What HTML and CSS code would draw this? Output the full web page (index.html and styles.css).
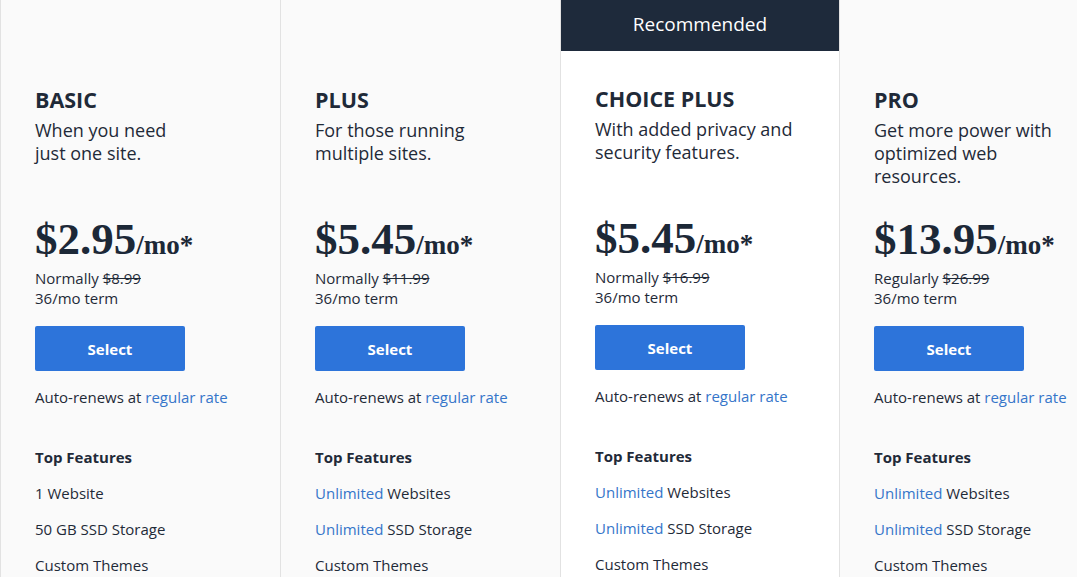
FILE: index.html
```html
<!DOCTYPE html>
<html lang="en">
<head>
  <meta charset="UTF-8">
  <title>Hosting Plans</title>
  <link rel="stylesheet" href="styles.css">
</head>
<body>
  <div class="plans">
    <div class="plan">
      <div class="plan-badge"></div>
      <div class="plan-body">
        <h3 class="plan-name">BASIC</h3>
        <p class="plan-desc">When you need<br>just one site.</p>
        <div class="plan-price">$2.95<span class="per">/mo*</span></div>
        <p class="plan-note">Normally <s>$8.99</s><br>36/mo term</p>
        <button class="select-btn">Select</button>
        <p class="renews">Auto-renews at <a href="#">regular rate</a></p>
        <h4 class="features-title">Top Features</h4>
        <ul class="features">
          <li>1 Website</li>
          <li>50 GB SSD Storage</li>
          <li>Custom Themes</li>
        </ul>
      </div>
    </div>

    <div class="plan">
      <div class="plan-badge"></div>
      <div class="plan-body">
        <h3 class="plan-name">PLUS</h3>
        <p class="plan-desc">For those running<br>multiple sites.</p>
        <div class="plan-price">$5.45<span class="per">/mo*</span></div>
        <p class="plan-note">Normally <s>$11.99</s><br>36/mo term</p>
        <button class="select-btn">Select</button>
        <p class="renews">Auto-renews at <a href="#">regular rate</a></p>
        <h4 class="features-title">Top Features</h4>
        <ul class="features">
          <li><span class="hl">Unlimited</span> Websites</li>
          <li><span class="hl">Unlimited</span> SSD Storage</li>
          <li>Custom Themes</li>
        </ul>
      </div>
    </div>

    <div class="plan featured">
      <div class="plan-badge">Recommended</div>
      <div class="plan-body">
        <h3 class="plan-name">CHOICE PLUS</h3>
        <p class="plan-desc">With added privacy and<br>security features.</p>
        <div class="plan-price">$5.45<span class="per">/mo*</span></div>
        <p class="plan-note">Normally <s>$16.99</s><br>36/mo term</p>
        <button class="select-btn">Select</button>
        <p class="renews">Auto-renews at <a href="#">regular rate</a></p>
        <h4 class="features-title">Top Features</h4>
        <ul class="features">
          <li><span class="hl">Unlimited</span> Websites</li>
          <li><span class="hl">Unlimited</span> SSD Storage</li>
          <li>Custom Themes</li>
        </ul>
      </div>
    </div>

    <div class="plan last">
      <div class="plan-badge"></div>
      <div class="plan-body">
        <h3 class="plan-name">PRO</h3>
        <p class="plan-desc">Get more power with<br>optimized web<br>resources.</p>
        <div class="plan-price">$13.95<span class="per">/mo*</span></div>
        <p class="plan-note">Regularly <s>$26.99</s><br>36/mo term</p>
        <button class="select-btn">Select</button>
        <p class="renews">Auto-renews at <a href="#">regular rate</a></p>
        <h4 class="features-title">Top Features</h4>
        <ul class="features">
          <li><span class="hl">Unlimited</span> Websites</li>
          <li><span class="hl">Unlimited</span> SSD Storage</li>
          <li>Custom Themes</li>
        </ul>
      </div>
    </div>
  </div>
</body>
</html>
```

FILE: styles.css
```css
body {
  margin: 0;
  padding: 0;
  background: #fafafa;
  font-family: 'Open Sans', Lato, Arial, sans-serif;
  color: #1f2a38;
  overflow: hidden;
}
.plans {
  display: grid;
  grid-template-columns: 280px 280px 280px 280px;
  height: 577px;
}
.plan {
  border-left: 1px solid #e2e2e2;
  background: #fafafa;
}
.plan.featured {
  background: #fff;
  border-right: 1px solid #e2e2e2;
}
.plan.last {
  border-left: none;
}
.plan-badge {
  height: 51px;
  color: #fff;
  font-size: 19px;
  line-height: 49px;
  text-align: center;
}
.featured .plan-badge {
  background: #1e2a3b;
}
.plan-body {
  padding: 36px 10px 0 34px;
}
.featured .plan-body {
  padding-top: 35px;
}
.plan-name {
  margin: 0;
  font-size: 21.5px;
  line-height: 26px;
  font-weight: bold;
}
.plan-desc {
  margin: 6px 0 0;
  font-size: 18px;
  line-height: 23px;
  min-height: 69px;
}
.plan-price {
  margin-top: 26px;
  font-family: 'Liberation Serif', 'Times New Roman', serif;
  font-weight: bold;
  font-size: 45px;
  line-height: 50px;
  color: #1c2837;
}
.plan-price .per {
  font-size: 27px;
}
.plan-note {
  margin: -2px 0 0;
  font-size: 15px;
  line-height: 20px;
}
.plan-note s {
  text-decoration-thickness: 1px;
}
.select-btn {
  display: block;
  margin-top: 18px;
  width: 150px;
  height: 45px;
  border: none;
  border-radius: 2px;
  background: #2d74da;
  color: #fff;
  font-family: inherit;
  font-size: 15px;
  font-weight: bold;
  cursor: pointer;
}
.renews {
  margin: 16px 0 0;
  font-size: 15px;
  line-height: 20px;
}
.renews a, .hl {
  color: #3575c9;
  text-decoration: none;
}
.features-title {
  margin: 40px 0 0;
  font-size: 15px;
  line-height: 20px;
  font-weight: bold;
}
.features {
  list-style: none;
  margin: 0;
  padding: 0;
}
.features li {
  margin-top: 16px;
  font-size: 15px;
  line-height: 20px;
}
```
